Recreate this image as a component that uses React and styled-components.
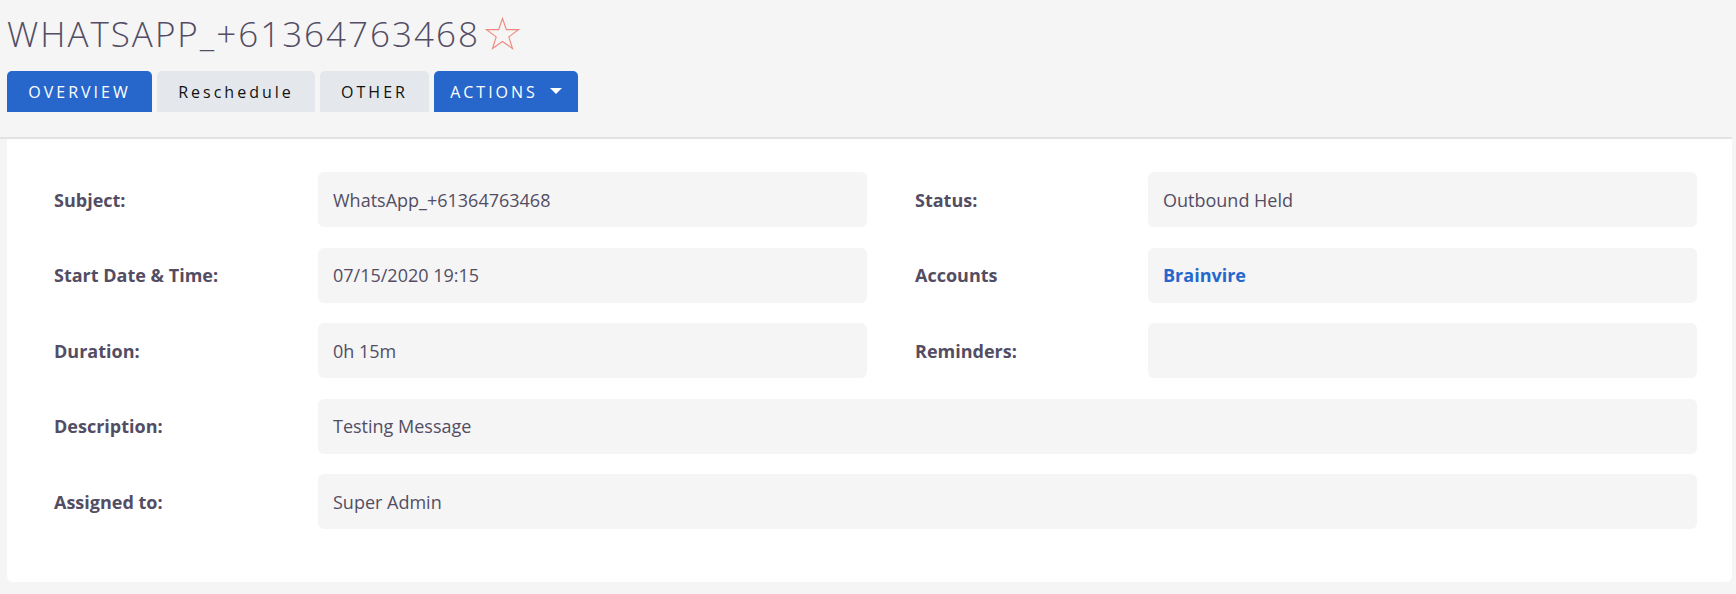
import React from "react";
import styled, { createGlobalStyle } from "styled-components";

const GlobalStyle = createGlobalStyle`
  html, body {
    margin: 0;
    padding: 0;
    background: #f5f5f5;
    font-family: "Open Sans", "Noto Sans", sans-serif;
  }
`;

const Page = styled.div`
  padding: 0 4px 12px 7px;
`;

const Header = styled.header`
  border-bottom: 2px solid #e2e2e2;
  margin-left: -7px;
  padding-left: 7px;
  padding-bottom: 25px;
`;

const TitleRow = styled.div`
  display: flex;
  align-items: center;
  gap: 5px;
  padding-top: 11px;
  height: 46px;
`;

const Title = styled.h1`
  margin: 0;
  font-family: "Open Sans", sans-serif;
  font-weight: 300;
  font-size: 35px;
  line-height: 46px;
  letter-spacing: 2px;
  color: #534d64;
`;

const StarIcon = styled.svg`
  width: 35px;
  height: 33px;
  flex: none;
  margin-top: -2px;
`;

const Tabs = styled.nav`
  display: flex;
  gap: 5px;
  margin-top: 14px;
`;

const Tab = styled.button`
  display: flex;
  align-items: center;
  justify-content: center;
  gap: 12px;
  height: 41px;
  width: ${(p) => p.$w}px;
  padding: 0;
  border: none;
  border-radius: 5px 5px 0 0;
  background: ${(p) => (p.$active ? "#2767cc" : "#e4e8ec")};
  color: ${(p) => (p.$active ? "#ffffff" : "#111111")};
  font-family: "Open Sans", sans-serif;
  font-size: 16px;
  letter-spacing: 3px;
  cursor: pointer;
`;

const Caret = styled.span`
  width: 0;
  height: 0;
  border-left: 6px solid transparent;
  border-right: 6px solid transparent;
  border-top: 6px solid #ffffff;
  margin-bottom: 2px;
`;

const Card = styled.section`
  background: #ffffff;
  border-radius: 0 0 6px 6px;
  padding: 33px 35px 53px 47px;
  display: grid;
  grid-template-columns: 264px 549px 281px 549px;
  row-gap: 20.5px;
`;

const Label = styled.div`
  display: flex;
  align-items: center;
  padding-left: ${(p) => (p.$second ? "48px" : "0")};
  font-family: "Open Sans", sans-serif;
  font-weight: 700;
  font-size: 18px;
  color: #534d64;
`;

const Value = styled.div`
  grid-column: ${(p) => (p.$wide ? "2 / 5" : "auto")};
  display: flex;
  align-items: center;
  height: 55px;
  box-sizing: border-box;
  padding: 0 15px;
  background: #f5f5f5;
  border-radius: 6px;
  font-family: "Open Sans", sans-serif;
  font-size: 18px;
  color: #534d64;
`;

const Link = styled.a`
  color: #2767cc;
  font-weight: 700;
  text-decoration: none;
`;

const Star = () => (
  <StarIcon viewBox="0 0 36 34">
    <polygon
      points="18,1.5 22,13 34.5,13 24.5,20.5 28.3,32.5 18,25.2 7.7,32.5 11.5,20.5 1.5,13 14,13"
      fill="none"
      stroke="#f08a80"
      strokeWidth="1.2"
      strokeLinejoin="miter"
    />
  </StarIcon>
);

export default function App() {
  return (
    <Page>
      <GlobalStyle />
      <Header>
        <TitleRow>
          <Title>WHATSAPP_+61364763468</Title>
          <Star />
        </TitleRow>
        <Tabs>
          <Tab $active $w={145}>OVERVIEW</Tab>
          <Tab $w={158}>Reschedule</Tab>
          <Tab $w={109}>OTHER</Tab>
          <Tab $active $w={144}>
            ACTIONS
            <Caret />
          </Tab>
        </Tabs>
      </Header>
      <Card>
        <Label>Subject:</Label>
        <Value>WhatsApp_+61364763468</Value>
        <Label $second>Status:</Label>
        <Value>Outbound Held</Value>

        <Label>Start Date &amp; Time:</Label>
        <Value>07/15/2020 19:15</Value>
        <Label $second>Accounts</Label>
        <Value>
          <Link href="#">Brainvire</Link>
        </Value>

        <Label>Duration:</Label>
        <Value>0h 15m</Value>
        <Label $second>Reminders:</Label>
        <Value />

        <Label>Description:</Label>
        <Value $wide>Testing Message</Value>

        <Label>Assigned to:</Label>
        <Value $wide>Super Admin</Value>
      </Card>
    </Page>
  );
}
